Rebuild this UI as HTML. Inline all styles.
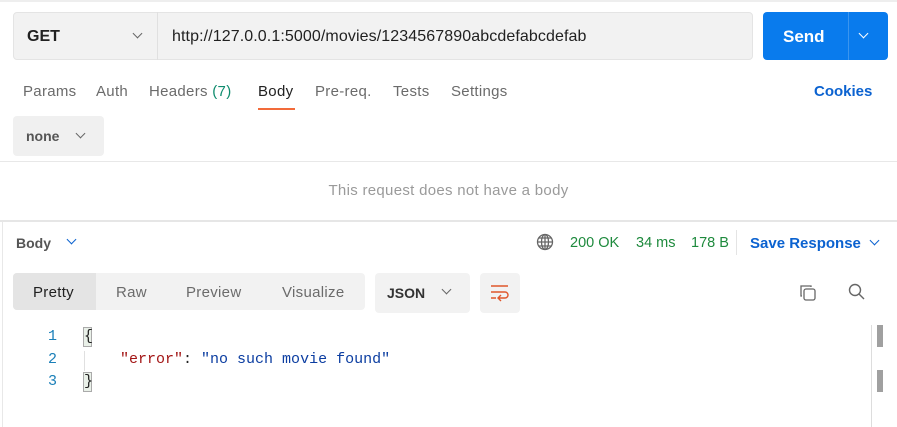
<!DOCTYPE html>
<html><head><style>
*{margin:0;padding:0;box-sizing:border-box}
body{width:897px;height:427px;background:#fff;font-family:"Liberation Sans",sans-serif;position:relative;overflow:hidden;color:#212121}
.a{position:absolute}
.t{position:absolute;font-size:15px;letter-spacing:0.3px;color:#6b6b6b;top:83px}
.chev{position:absolute;width:7px;height:7px;border-right:1.5px solid #666;border-bottom:1.5px solid #666;transform:rotate(45deg)}
.mono{font-family:"Liberation Mono",monospace;font-size:15px}
</style></head><body>
<div class="a" style="left:0;top:0;width:897px;height:2px;background:#eee"></div>
<div class="a" style="left:13px;top:12px;width:740px;height:48px;background:#f2f2f2;border:1px solid #e4e4e4;border-radius:4px"></div>
<div class="a" style="left:157px;top:12px;width:1px;height:48px;background:#e0e0e0"></div>
<div class="a" style="left:27px;top:28px;font-size:16px;font-weight:bold;color:#212121">GET</div>
<div class="chev" style="left:134px;top:30px"></div>
<div class="a" style="left:172px;top:28px;font-size:16px;letter-spacing:0.1px;color:#212121">http://127.0.0.1:5000/movies/1234567890abcdefabcdefab</div>
<div class="a" style="left:763px;top:12px;width:125px;height:48px;background:#097bed;border-radius:4px"></div>
<div class="a" style="left:848px;top:12px;width:1px;height:48px;background:#3a95ef"></div>
<div class="a" style="left:783px;top:27px;font-size:17px;font-weight:bold;color:#fff">Send</div>
<div class="chev" style="left:860px;top:30px;border-color:#fff"></div>
<div class="t" style="left:23px">Params</div>
<div class="t" style="left:96px">Auth</div>
<div class="t" style="left:149px">Headers <span style="color:#0f8c6e">(7)</span></div>
<div class="t" style="left:258px;color:#212121">Body</div>
<div class="a" style="left:258px;top:108px;width:37px;height:2px;background:#f26b3a"></div>
<div class="t" style="left:315px">Pre-req.</div>
<div class="t" style="left:393px">Tests</div>
<div class="t" style="left:451px">Settings</div>
<div class="t" style="left:814px;color:#0b62d0;font-weight:bold;letter-spacing:0">Cookies</div>
<div class="a" style="left:13px;top:116px;width:91px;height:40px;background:#f0f0f0;border-radius:4px"></div>
<div class="a" style="left:26px;top:128px;font-size:14px;font-weight:bold;color:#555">none</div>
<div class="chev" style="left:77px;top:130px"></div>
<div class="a" style="left:0;top:161px;width:897px;height:1px;background:#e8e8e8"></div>
<div class="a" style="left:0;top:182px;width:897px;text-align:center;font-size:15px;letter-spacing:0.3px;color:#9a9a9a">This request does not have a body</div>
<div class="a" style="left:0;top:220px;width:897px;height:2px;background:#e6e6e6"></div>
<div class="a" style="left:2px;top:222px;width:1px;height:205px;background:#e8e8e8"></div>
<div class="a" style="left:16px;top:235px;font-size:14px;font-weight:bold;color:#555">Body</div>
<div class="chev" style="left:68px;top:236px;border-color:#0b62d0"></div>
<svg class="a" style="left:536px;top:233px" width="18" height="18" viewBox="0 0 18 18" fill="none" stroke="#666" stroke-width="1.3"><circle cx="9" cy="9" r="7.5"/><ellipse cx="9" cy="9" rx="3.5" ry="7.5"/><path d="M1.5 9h15M9 1.5v15M3 5h12M3 13h12"/></svg>
<div class="a" style="left:570px;top:235px;font-size:14.5px;color:#1e8a3d">200 OK</div>
<div class="a" style="left:636px;top:235px;font-size:14.5px;color:#1e8a3d">34 ms</div>
<div class="a" style="left:691px;top:235px;font-size:14.5px;color:#1e8a3d">178 B</div>
<div class="a" style="left:736px;top:230px;width:1px;height:25px;background:#e4e4e4"></div>
<div class="a" style="left:750px;top:235px;font-size:15px;color:#0b62d0;font-weight:bold">Save Response</div>
<div class="chev" style="left:871px;top:237px;border-color:#0b62d0"></div>
<div class="a" style="left:13px;top:273px;width:352px;height:37px;background:#f2f2f2;border-radius:4px"></div>
<div class="a" style="left:13px;top:273px;width:83px;height:37px;background:#e4e4e4;border-radius:4px 0 0 4px"></div>
<div class="a" style="left:33px;top:284px;font-size:15px;letter-spacing:0.3px;color:#212121">Pretty</div>
<div class="a" style="left:116px;top:284px;font-size:15px;letter-spacing:0.3px;color:#6b6b6b">Raw</div>
<div class="a" style="left:186px;top:284px;font-size:15px;letter-spacing:0.3px;color:#6b6b6b">Preview</div>
<div class="a" style="left:282px;top:284px;font-size:15px;letter-spacing:0.3px;color:#6b6b6b">Visualize</div>
<div class="a" style="left:375px;top:273px;width:95px;height:40px;background:#f2f2f2;border-radius:4px"></div>
<div class="a" style="left:387px;top:285px;font-size:14px;font-weight:bold;color:#333">JSON</div>
<div class="chev" style="left:443px;top:286px"></div>
<div class="a" style="left:480px;top:273px;width:40px;height:40px;background:#f2f2f2;border-radius:4px"></div>
<svg class="a" style="left:490px;top:283px" width="20" height="20" viewBox="0 0 20 20" fill="none" stroke="#e0562b" stroke-width="1.4"><path d="M1 3h17M1 9h14a3 3 0 0 1 0 6h-6M11 12l-3 3 3 3M1 15h5"/></svg>
<svg class="a" style="left:798px;top:283px" width="20" height="20" viewBox="0 0 20 20" fill="none" stroke="#666" stroke-width="1.3"><rect x="6" y="6" width="11" height="11" rx="2"/><path d="M4 13h-1V3h10v1"/></svg>
<svg class="a" style="left:847px;top:282px" width="20" height="20" viewBox="0 0 20 20" fill="none" stroke="#666" stroke-width="1.4"><circle cx="8" cy="8" r="5.5"/><path d="M12 12l5 5"/></svg>
<div class="a mono" style="left:48px;top:326px;color:#1a7fb8;line-height:22.5px">1<br>2<br>3</div>
<div class="a" style="left:83px;top:327px;width:9px;height:20px;border:1px solid #aaa;background:#e9f0e8"></div>
<div class="a" style="left:83px;top:372px;width:9px;height:20px;border:1px solid #aaa;background:#e9f0e8"></div>
<div class="a" style="left:84px;top:351px;width:1px;height:20px;background:#e0e0e0"></div>
<div class="a mono" style="left:84px;top:326px;line-height:22.5px;color:#222">{<br>&nbsp;&nbsp;&nbsp;&nbsp;<span style="color:#a31515">"error"</span>: <span style="color:#0b3da1">"no such movie found"</span><br>}</div>
<div class="a" style="left:871px;top:325px;width:1px;height:102px;background:#ddd"></div>
<div class="a" style="left:877px;top:325px;width:6px;height:22px;background:#a0a0a0"></div>
<div class="a" style="left:877px;top:370px;width:6px;height:22px;background:#a0a0a0"></div>
</body></html>
